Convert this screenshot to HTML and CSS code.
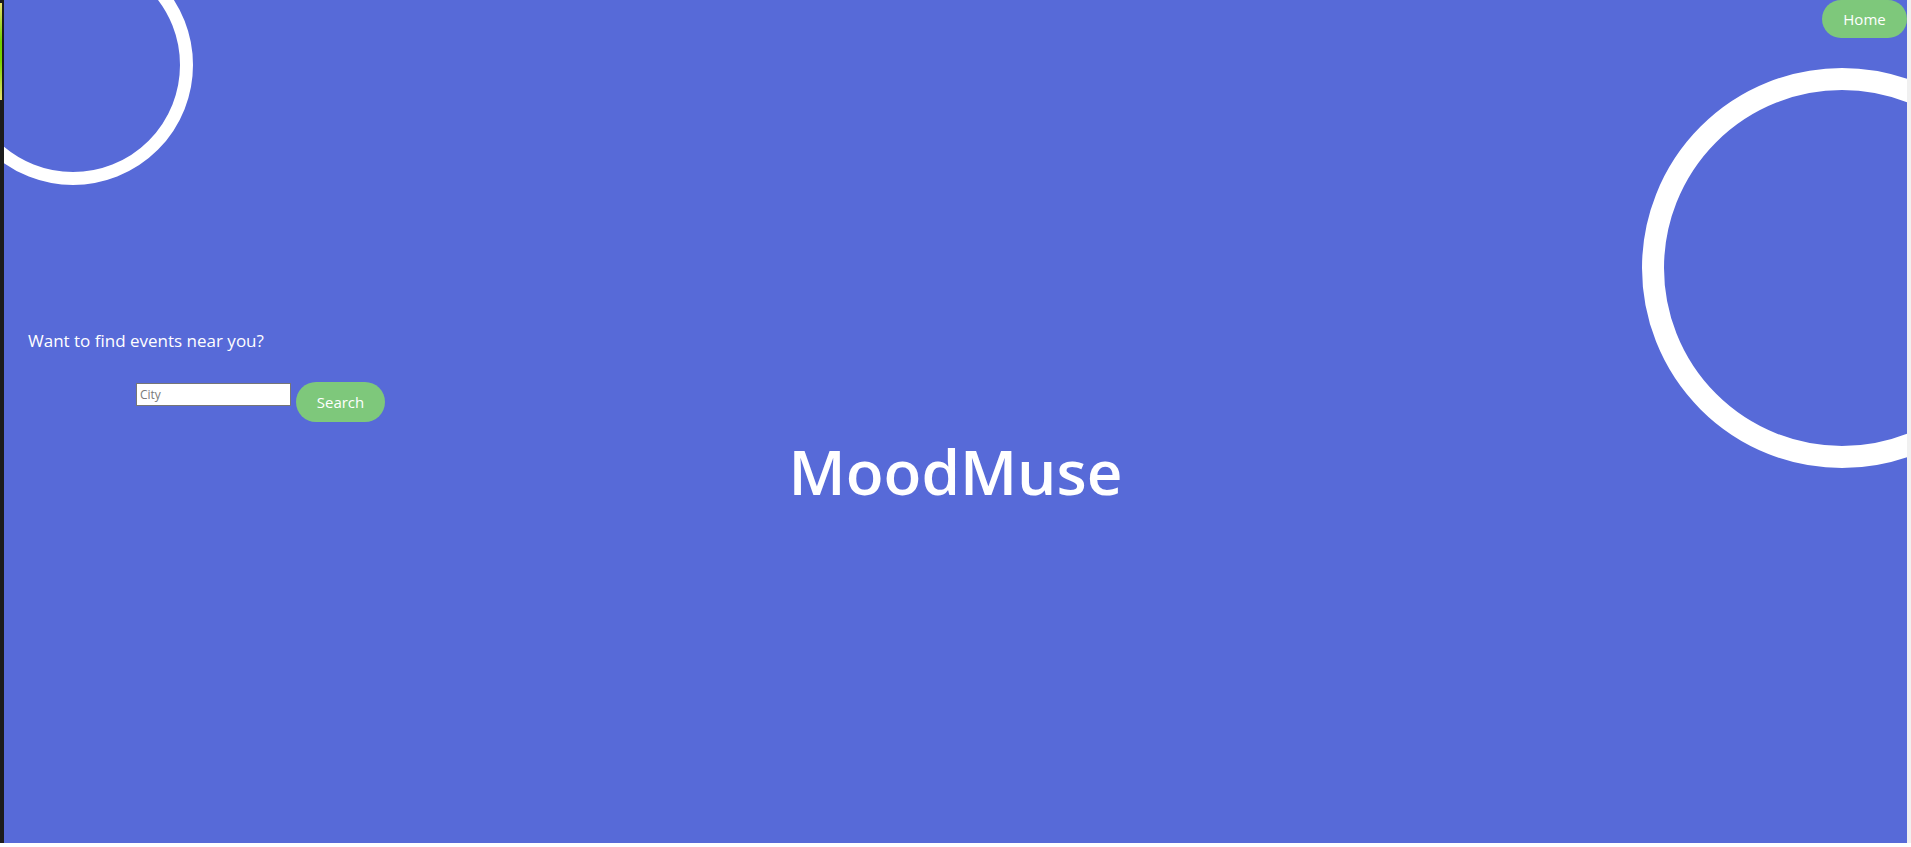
FILE: index.html
```html
<!DOCTYPE html>
<html lang="en">
<head>
<meta charset="utf-8">
<title>MoodMuse</title>
<link rel="stylesheet" href="styles.css">
</head>
<body>
<div class="frame">
  <div class="edge-left"><div class="edge-accent"></div></div>
  <main class="hero">
    <div class="ring ring-small"></div>
    <div class="ring ring-large"></div>
    <header class="topbar">
      <button class="pill home-btn" type="button">Home</button>
    </header>
    <p class="prompt">Want to find events near you?</p>
    <form class="search-row" onsubmit="return false">
      <input class="city-input" type="text" placeholder="City">
      <button class="pill search-btn" type="submit">Search</button>
    </form>
    <h1 class="title">MoodMuse</h1>
  </main>
  <div class="edge-right"></div>
</div>
<div class="bottom-strip"></div>
</body>
</html>
```

FILE: styles.css
```css
html, body {
  margin: 0;
  padding: 0;
  background: #ffffff;
  font-family: "Open Sans", "Noto Sans", "Liberation Sans", sans-serif;
}

.frame {
  display: flex;
  height: 843px;
}

.edge-left {
  width: 4px;
  flex: none;
  background: #1c1c1c;
}

.edge-accent {
  margin-top: 3px;
  width: 2px;
  height: 97px;
  background: linear-gradient(#e8e070, #6fd000 40%, #7ad400 60%, #e8e070);
}

.edge-right {
  width: 4px;
  flex: none;
  background: #f0f0f0;
}

.hero {
  position: relative;
  flex: 1;
  overflow: hidden;
  background: #576ad8;
  display: flex;
  flex-direction: column;
  color: #ffffff;
}

.ring {
  position: absolute;
  border-radius: 50%;
  border-style: solid;
  border-color: #ffffff;
  box-sizing: border-box;
  pointer-events: none;
}

.ring-small {
  width: 240px;
  height: 240px;
  border-width: 13px;
  left: -51px;
  top: -55px;
}

.ring-large {
  width: 400px;
  height: 400px;
  border-width: 22px;
  left: 1638px;
  top: 68px;
}

.topbar {
  display: flex;
  justify-content: flex-end;
  height: 39px;
  position: relative;
}

.pill {
  border: none;
  background: #7ec87b;
  color: #ffffff;
  font-family: "Open Sans", "Noto Sans", sans-serif;
  font-size: 15px;
  cursor: pointer;
  padding: 0;
}

.home-btn {
  width: 85px;
  height: 38px;
  border-radius: 20px;
}

.prompt {
  margin: 290px 0 0 24px;
  font-size: 17px;
  line-height: 24px;
  position: relative;
}

.search-row {
  margin: 29px 0 0 132px;
  display: flex;
  align-items: flex-start;
  gap: 5px;
  position: relative;
}

.city-input {
  margin-top: 1px;
  width: 155px;
  height: 23px;
  box-sizing: border-box;
  border: 1px solid #767676;
  padding: 0 3px;
  font-family: "Open Sans", "Noto Sans", sans-serif;
  font-size: 12px;
  background: #ffffff;
}

.city-input::placeholder {
  color: #7a7a7a;
}

.search-btn {
  width: 89px;
  height: 40px;
  border-radius: 20px;
}

.title {
  margin: 11px 0 0 0;
  text-align: center;
  font-size: 62px;
  line-height: 76px;
  font-weight: 650;
  position: relative;
}

.bottom-strip {
  height: 4px;
  background: #ffffff;
}
```
